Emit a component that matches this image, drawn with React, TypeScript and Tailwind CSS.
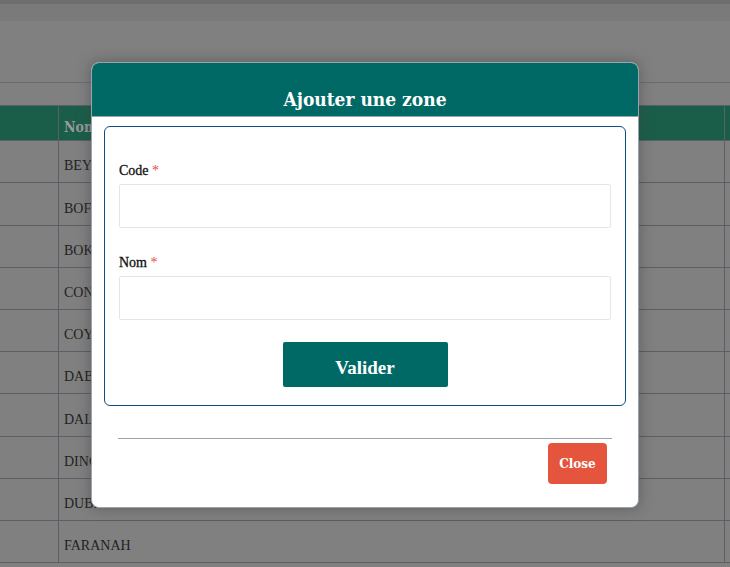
import React from "react";

const rows: [string, number][] = [
  ["BEYLA", 42],
  ["BOFFA", 43],
  ["BOKE", 42],
  ["CONAKRY", 42],
  ["COYAH", 42],
  ["DABOLA", 42],
  ["DALABA", 43],
  ["DINGUIRAYE", 42],
  ["DUBREKA", 42],
  ["FARANAH", 42],
];

export default function App() {
  return (
    <div className="relative h-[567px] w-[730px] overflow-hidden bg-[#808080]" style={{ fontFamily: '"Liberation Serif", serif' }}>
      <div className="h-[4px] bg-[#6e6e6f]" />
      <div className="h-[17px] bg-[#7a7a7b]" />
      <div className="h-[62px] border-b border-[#676d74] bg-[#808080]" />
      <div className="h-[22px]" />
      <div className="flex h-[36px] border-y border-[#5a5e66] bg-[#1a5e4a]">
        <div className="w-[59px] border-r border-[#5a5e66]" />
        <div className="flex w-[666px] items-center border-r border-[#5a5e66] pl-[5px] pt-[8px] text-[14px] font-bold text-[#9a9a9a]" style={{ fontFamily: '"DejaVu Serif Condensed", serif' }}>Nom</div>
        <div className="flex-1" />
      </div>
      {rows.map(([r, h]) => (
        <div key={r} className={`flex border-b border-[#5a5e66] ${h === 43 ? "h-[43px]" : "h-[42px]"}`}>
          <div className="w-[59px] border-r border-[#5a5e66]" />
          <div className="flex w-[666px] items-center border-r border-[#5a5e66] pl-[5px] pt-[8px] text-[14px] text-[#222]">{r}</div>
          <div className="flex-1" />
        </div>
      ))}

      <div className="absolute left-[91px] top-[62px] flex h-[446px] w-[548px] flex-col overflow-hidden rounded-[8px] border border-[#98a3ad] bg-white shadow-[0_0_14px_rgba(60,60,60,0.5)]">
        <div className="flex h-[54px] items-end justify-center border-b border-[#9aa4ae] bg-[#006966] pb-[3px]">
          <span className="text-[19px] font-bold text-white" style={{ fontFamily: '"DejaVu Serif Condensed", "DejaVu Serif", serif' }}>Ajouter une zone</span>
        </div>
        <div className="px-[12px] pt-[9px]">
          <div className="flex h-[280px] flex-col rounded-[6px] border border-[#0b4f80] px-[14px] pt-[34px]">
            <label className="h-[20px] text-[14px] leading-[20px] text-[#111] [-webkit-text-stroke:0.3px_#111]">
              Code <span className="text-[#e74c3c] [-webkit-text-stroke:0px]">*</span>
            </label>
            <div className="mt-[3px] h-[44px] rounded-[2px] border border-[#e2e5e9]" />
            <label className="mt-[25px] h-[20px] text-[14px] leading-[20px] text-[#111] [-webkit-text-stroke:0.3px_#111]">
              Nom <span className="text-[#e74c3c] [-webkit-text-stroke:0px]">*</span>
            </label>
            <div className="mt-[3px] h-[44px] rounded-[2px] border border-[#e2e5e9]" />
            <div className="mt-[22px] flex justify-center">
              <button className="flex h-[45px] w-[165px] items-center justify-center rounded-[2px] bg-[#006966] pt-[8px] text-[19px] font-bold text-white">Valider</button>
            </div>
          </div>
        </div>
        <div className="mx-[26px] mt-[32px] border-t border-[#9aa4ae]" />
        <div className="flex justify-end pr-[31px] pt-[4px]">
          <button className="flex h-[41px] w-[59px] items-center justify-center rounded-[4px] bg-[#e5553d] text-[12px] font-bold text-white" style={{ fontFamily: '"DejaVu Serif", serif' }}>Close</button>
        </div>
      </div>
    </div>
  );
}
